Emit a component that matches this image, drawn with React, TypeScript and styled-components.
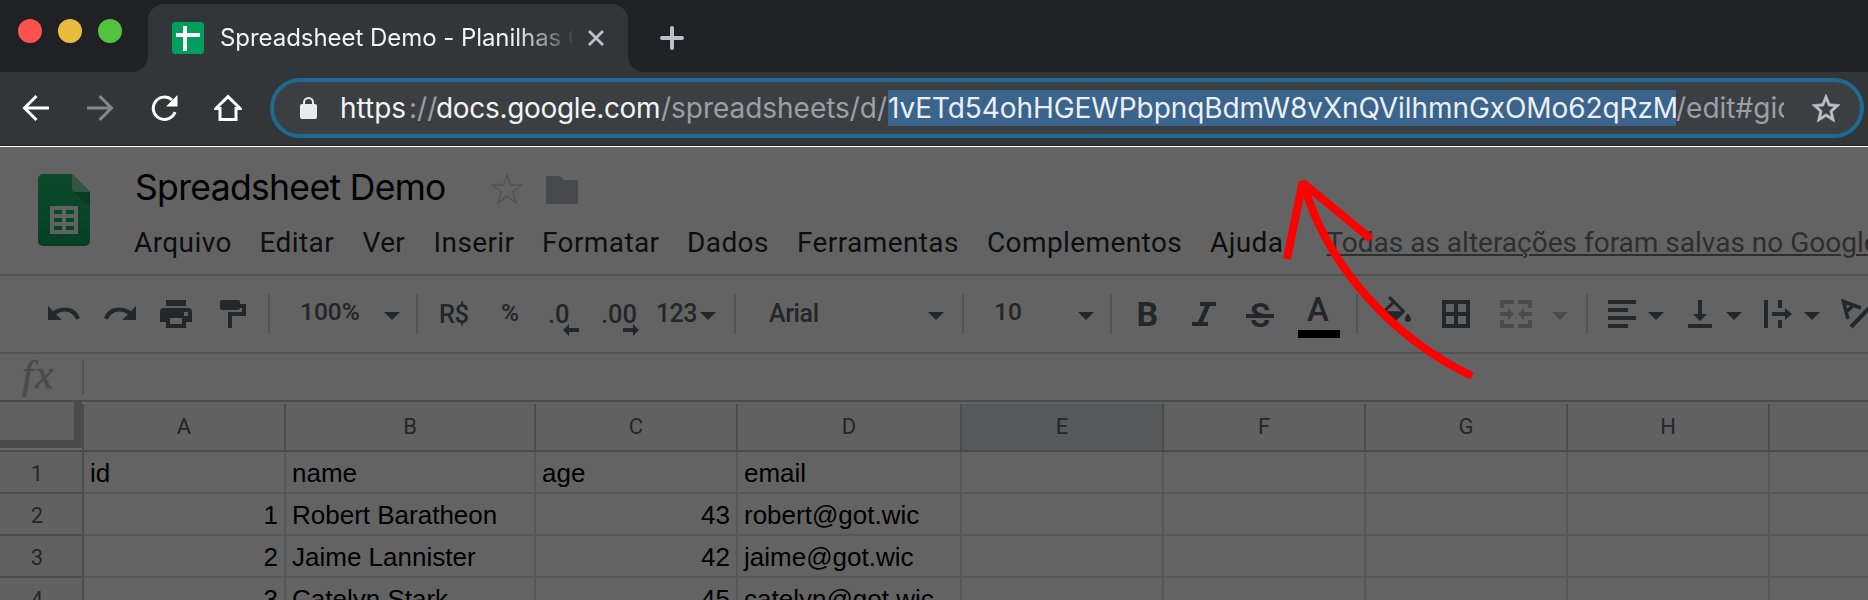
import React from 'react';
import styled, { createGlobalStyle, css } from 'styled-components';

const ui = "Inter, 'Liberation Sans', sans-serif";
const roboto = "Roboto, 'Liberation Sans', sans-serif";
const ink = '#242628';
const pageBg = '#636363';
const headLine = '#4b4b4b';
const cellLine = '#575757';

const Global = createGlobalStyle`
  *, *::before, *::after { box-sizing: border-box; }
  html, body { margin: 0; padding: 0; background: ${pageBg}; overflow: hidden; }
  svg { display: block; flex: none; }
`;

const Window = styled.div`
  position: relative;
  width: 1868px;
  height: 600px;
  overflow: hidden;
  display: flex;
  flex-direction: column;
  background: ${pageBg};
`;

/* ---------- browser chrome ---------- */

const TabStrip = styled.div`
  flex: none;
  height: 72px;
  display: flex;
  background: #202124;
`;

const Lights = styled.div`
  width: 148px;
  padding: 19px 0 0 18px;
  display: flex;
  gap: 16px;
`;

const Light = styled.span<{ $color: string }>`
  width: 24px;
  height: 24px;
  border-radius: 50%;
  background: ${(p) => p.$color};
`;

const Tab = styled.div`
  position: relative;
  width: 480px;
  height: 68px;
  margin-top: 4px;
  padding: 0 24px;
  display: flex;
  align-items: center;
  border-radius: 16px 16px 0 0;
  background: #323639;
  &::before, &::after {
    content: '';
    position: absolute;
    bottom: 0;
    width: 16px;
    height: 16px;
  }
  &::before { left: -16px; background: radial-gradient(circle at 0 0, transparent 15.5px, #323639 16.5px); }
  &::after { right: -16px; background: radial-gradient(circle at 100% 0, transparent 15.5px, #323639 16.5px); }
`;

const TabTitle = styled.span`
  width: 352px;
  margin: 0 16px;
  overflow: hidden;
  white-space: nowrap;
  font: 420 24px/32px ${ui};
  letter-spacing: -0.05px;
  color: #f1f3f4;
  mask-image: linear-gradient(90deg, #000 295px, transparent 358px);
`;

const NewTab = styled.div`
  padding: 26px 0 0 32px;
`;

const NavBar = styled.div`
  flex: none;
  height: 75px;
  padding: 6px 4px 0 22px;
  display: flex;
  background: #323639;
  border-bottom: 1px solid #fff;
  box-shadow: inset 0 -1px 0 #242127;
`;

const NavIcons = styled.div`
  width: 248px;
  padding-top: 16px;
  display: flex;
  gap: 36px;
`;

const Omnibox = styled.div`
  width: 1594px;
  height: 60px;
  border: 4px solid #1f6a91;
  border-radius: 30px;
  background: #3c3f42;
  display: flex;
  align-items: center;
`;

const LockSlot = styled.div`
  width: 66px;
  padding-left: 25.5px;
`;

const Url = styled.div`
  width: 1444px;
  height: 36px;
  display: flex;
  overflow: hidden;
  white-space: pre;
  font: 430 28px/37px ${ui};
  color: #f1f3f4;
`;

const UrlPart = styled.span<{ $w: number; $dim?: boolean; $sel?: boolean; $ls?: number }>`
  flex: none;
  width: ${(p) => p.$w}px;
  letter-spacing: ${(p) => p.$ls ?? 0}px;
  ${(p) => p.$dim && css`color: #9aa0a6; font-weight: 400;`}
  ${(p) => p.$sel && css`background: #3a648b; color: #eaf0f6; font-weight: 400;`}
`;

const StarSlot = styled.div`
  padding-left: 27.5px;
`;

/* ---------- document header ---------- */

const DocHeader = styled.div`
  flex: none;
  height: 129px;
  display: flex;
  border-bottom: 2px solid #535353;
`;

const LogoSlot = styled.div`
  width: 134px;
  padding: 27px 0 0 38px;
`;

const DocInfo = styled.div`
  flex: 1;
  min-width: 0;
`;

const TitleRow = styled.div`
  height: 78px;
  padding: 19px 0 0 1px;
  display: flex;
`;

const DocTitle = styled.span`
  width: 356px;
  white-space: nowrap;
  font: 430 35.5px/44px ${ui};
  letter-spacing: -0.67px;
  color: #000;
`;

const IconBox = styled.span<{ $ml?: number; $mt?: number }>`
  flex: none;
  margin-left: ${(p) => p.$ml ?? 0}px;
  margin-top: ${(p) => p.$mt ?? 0}px;
`;

const Menu = styled.div`
  display: flex;
  white-space: nowrap;
  font: 400 28px/36px ${roboto};
  letter-spacing: 0.4px;
  color: #0d0e0f;
`;

const MenuItem = styled.span<{ $w: number }>`
  flex: none;
  width: ${(p) => p.$w}px;
`;

const SavedNote = styled.span`
  color: #2e2e2e;
  letter-spacing: 0;
  text-decoration: underline;
  text-decoration-thickness: 2px;
  text-underline-offset: 2px;
`;

/* ---------- toolbar ---------- */

const Toolbar = styled.div`
  flex: none;
  height: 78px;
  display: flex;
  border-bottom: 2px solid #535353;
  color: ${ink};
`;

const Tool = styled.span<{ $ml: number; $mt: number; $w?: number; $faded?: boolean }>`
  flex: none;
  margin: ${(p) => p.$mt}px 0 0 ${(p) => p.$ml}px;
  ${(p) => p.$w && css`width: ${p.$w}px;`}
  ${(p) => p.$faded && css`color: #4a4a4b;`}
`;

const ToolText = styled(Tool)<{ $size?: number; $weight?: number; $ls?: number }>`
  height: 32px;
  white-space: nowrap;
  font: ${(p) => p.$weight ?? 500} ${(p) => p.$size ?? 25}px/32px ${roboto};
  letter-spacing: ${(p) => p.$ls ?? 0}px;
`;

const Divider = styled.span<{ $ml: number }>`
  flex: none;
  width: 2px;
  height: 40px;
  margin: 18px 0 0 ${(p) => p.$ml}px;
  background: #535353;
`;

const StrikeText = styled(ToolText)`
  position: relative;
  text-align: center;
  &::after {
    content: '';
    position: absolute;
    left: 0;
    right: 0;
    top: 14px;
    height: 6px;
    background: linear-gradient(${ink} 0 4px, ${pageBg} 4px);
  }
`;

const ColorText = styled(ToolText)`
  height: 44px;
  padding-right: 2px;
  text-align: center;
  border-bottom: 8px solid #000;
`;

/* ---------- formula bar ---------- */

const FormulaBar = styled.div`
  flex: none;
  height: 48px;
  display: flex;
  border-bottom: 2px solid ${headLine};
`;

const Fx = styled.span`
  width: 82px;
  height: 46px;
  padding-left: 22px;
  font: italic 400 41px/40px 'Liberation Serif', serif;
  letter-spacing: 1.5px;
  -webkit-text-stroke: 0.6px #4a4a4a;
  color: #4a4a4a;
`;

const FxDivider = styled.span`
  width: 2px;
  height: 34px;
  margin-top: 6px;
  background: #505050;
`;

/* ---------- grid ---------- */

const columns = '84px 202px 250px 202px 224px 202px 202px 202px 202px 98px';

const HeadRow = styled.div`
  flex: none;
  height: 50px;
  display: grid;
  grid-template-columns: ${columns};
  grid-template-rows: 48px;
  border-bottom: 2px solid ${headLine};
`;

const Corner = styled.div`
  height: 46px;
  width: 82px;
  border: solid #4a4a4a;
  border-width: 0 8px 8px 0;
  background: #606060;
`;

const CornerCell = styled.div`
  background: linear-gradient(${headLine}, ${headLine}) right bottom / 2px 46px no-repeat, #686868;
`;

const ColHead = styled.div<{ $active?: boolean }>`
  margin-top: 2px;
  border-right: 2px solid ${headLine};
  background: ${(p) => (p.$active ? '#57585a' : '#616161')};
  text-align: center;
  font: 400 22px/46px ${roboto};
  color: ${ink};
  &:last-child { border-right: 0; }
`;

const Row = styled.div`
  flex: none;
  height: 42px;
  display: grid;
  grid-template-columns: ${columns};
  grid-template-rows: 42px;
`;

const RowHead = styled.div`
  padding-right: 8px;
  border: solid ${headLine};
  border-width: 0 2px 2px 0;
  background: #616161;
  text-align: center;
  font: 400 22px/43px ${roboto};
  color: ${ink};
`;

const Cell = styled.div<{ $right?: boolean }>`
  padding: 0 6px;
  border: solid ${cellLine};
  border-width: 0 2px 2px 0;
  white-space: nowrap;
  text-align: ${(p) => (p.$right ? 'right' : 'left')};
  font: 400 26px/42px 'Liberation Sans', Arial, sans-serif;
  color: #000;
  &:last-child { border-right: 0; }
`;

const ArrowOverlay = styled.svg`
  position: absolute;
  left: 1270px;
  top: 170px;
`;

const Caret = () => (
  <svg width="16" height="8" viewBox="0 0 16 8" fill="currentColor"><path d="M0 0h16L8 8z" /></svg>
);

const letters = ['A', 'B', 'C', 'D', 'E', 'F', 'G', 'H', ''];
const rows: string[][] = [
  ['id', 'name', 'age', 'email'],
  ['1', 'Robert Baratheon', '43', 'robert@got.wic'],
  ['2', 'Jaime Lannister', '42', 'jaime@got.wic'],
  ['3', 'Catelyn Stark', '45', 'catelyn@got.wic'],
];
const menu: [string, number][] = [
  ['Arquivo', 125.5], ['Editar', 103], ['Ver', 71], ['Inserir', 108.5], ['Formatar', 145],
  ['Dados', 110], ['Ferramentas', 190], ['Complementos', 223], ['Ajuda', 116.5],
];

function BrowserChrome() {
  return (
    <>
      <TabStrip>
        <Lights>
          <Light $color="#ff5150" />
          <Light $color="#e8bd3f" />
          <Light $color="#53c33f" />
        </Lights>
        <Tab>
          <svg width="32" height="32" viewBox="0 0 32 32">
            <rect width="32" height="32" rx="3" fill="#009f5b" />
            <path d="M4 11h24v4H4zM11 4h4v25h-4z" fill="#fff" />
          </svg>
          <TabTitle>Spreadsheet Demo - Planilhas Google</TabTitle>
          <svg width="16" height="16" viewBox="0 0 16 16" stroke="#bdc1c5" strokeWidth="2.8"><path d="M1 1l14 14M15 1L1 15" /></svg>
        </Tab>
        <NewTab>
          <svg width="24" height="24" viewBox="0 0 24 24" stroke="#bdc1c5" strokeWidth="4" strokeLinecap="round"><path d="M12 2v20M2 12h20" /></svg>
        </NewTab>
      </TabStrip>
      <NavBar>
        <NavIcons>
          <svg width="28" height="28" viewBox="0 0 28 28" fill="none" stroke="#fff" strokeWidth="3"><path d="M27 14H3M14.5 2L2.5 14l12 12" /></svg>
          <svg width="28" height="28" viewBox="0 0 28 28" fill="none" stroke="#85888a" strokeWidth="3"><path d="M1 14h24M13.5 2l12 12-12 12" /></svg>
          <svg width="28" height="28" viewBox="0 0 28 28" fill="none" stroke="#fff" strokeWidth="3"><path d="M25 18A11.2 11.2 0 1 1 22 6" /><path d="M27.5 1v11.5H16z" fill="#fff" stroke="none" /></svg>
          <svg width="28" height="28" viewBox="0 0 28 28" fill="none" stroke="#fff" strokeWidth="3"><path d="M1.8 14.5H6V25.5H22V14.5h4.2L14 2.6z" /></svg>
        </NavIcons>
        <Omnibox>
          <LockSlot>
            <svg width="17" height="22" viewBox="0 0 17 22"><rect y="7" width="17" height="15" rx="2" fill="#e8eaed" /><path d="M4 8V5.5a4.5 4.5 0 0 1 9 0V8" fill="none" stroke="#e8eaed" strokeWidth="2" /></svg>
          </LockSlot>
          <Url>
            <UrlPart $w={69}>https</UrlPart>
            <UrlPart $w={27} $dim>://</UrlPart>
            <UrlPart $w={225} $ls={-0.33}>docs.google.com</UrlPart>
            <UrlPart $w={227} $dim $ls={-0.03}>/spreadsheets/d/</UrlPart>
            <UrlPart $w={788} $sel $ls={-0.08}>1vETd54ohHGEWPbpnqBdmW8vXnQVilhmnGxOMo62qRzM</UrlPart>
            <UrlPart $w={108} $dim>/edit#gid</UrlPart>
          </Url>
          <StarSlot>
            <svg width="28" height="28" viewBox="2 2 20 19" preserveAspectRatio="none" fill="#bdc1c5" stroke="#bdc1c5" strokeWidth="0.4" overflow="visible">
              <path d="M22 9.24l-7.19-.62L12 2 9.19 8.63 2 9.24l5.46 4.73L5.82 21 12 17.27 18.18 21l-1.63-7.03L22 9.24zM12 15.4l-3.76 2.27 1-4.28-3.32-2.88 4.38-.38L12 6.1l1.71 4.04 4.38.38-3.32 2.88 1 4.28L12 15.4z" />
            </svg>
          </StarSlot>
        </Omnibox>
      </NavBar>
    </>
  );
}

function Header() {
  return (
    <DocHeader>
      <LogoSlot>
        <svg width="52" height="72" viewBox="0 0 52 72">
          <defs>
            <linearGradient id="sheet" x1="0" y1="0" x2="0" y2="1">
              <stop offset="0" stopColor="#0d4b2d" /><stop offset="1" stopColor="#053f24" />
            </linearGradient>
          </defs>
          <path d="M5 0h29l18 18v49a5 5 0 0 1-5 5H5a5 5 0 0 1-5-5V5a5 5 0 0 1 5-5z" fill="url(#sheet)" />
          <path d="M36 18l16 15V18z" fill="#073a22" />
          <path d="M34 0l18 18H38a4 4 0 0 1-4-4z" fill="#34543f" />
          <path fillRule="evenodd" fill="#5d6460" d="M12 32h28v28H12zM16 36v4h8v-4zm12 0v4h8v-4zM16 44v4h8v-4zm12 0v4h8v-4zM16 52v4h8v-4zm12 0v4h8v-4z" />
        </svg>
      </LogoSlot>
      <DocInfo>
        <TitleRow>
          <DocTitle>Spreadsheet Demo</DocTitle>
          <IconBox $mt={7}>
            <svg width="32" height="32" viewBox="0 0 32 32" fill="none" stroke="#4f4f50" strokeWidth="1.2"><path d="M16 2l3.6 10.2H30.500l-8.700 6.500 3.300 11.200L16 23.200 6.900 29.900l3.300-11.200L1.500 12.200h10.900z" /></svg>
          </IconBox>
          <IconBox $ml={23} $mt={10}>
            <svg width="32" height="28" viewBox="0 0 32 28" fill="#47484a"><path d="M2 0h12l4 4h12a2 2 0 0 1 2 2v20a2 2 0 0 1-2 2H2a2 2 0 0 1-2-2V2a2 2 0 0 1 2-2z" /></svg>
          </IconBox>
        </TitleRow>
        <Menu>
          {menu.map(([label, w]) => <MenuItem key={label} $w={w}>{label}</MenuItem>)}
          <SavedNote>Todas as alterações foram salvas no Google Drive</SavedNote>
        </Menu>
      </DocInfo>
    </DocHeader>
  );
}

function Tools() {
  return (
    <Toolbar>
      <Tool $ml={48} $mt={30}>
        <svg width="32" height="14" viewBox="0 0 32 14"><path d="M0 0l5 5C9 2.500 13 1.500 17 1.500c7 0 12.500 4 15 10.500l-4 1.500C26 8.500 22 5.500 17 5.500c-3.500 0-6.500 1-9 3L14 14H0z" fill="currentColor" /></svg>
      </Tool>
      <Tool $ml={24} $mt={30}>
        <svg width="32" height="14" viewBox="0 0 32 14"><path transform="translate(32 0) scale(-1 1)" d="M0 0l5 5C9 2.500 13 1.500 17 1.500c7 0 12.500 4 15 10.500l-4 1.500C26 8.500 22 5.500 17 5.500c-3.500 0-6.500 1-9 3L14 14H0z" fill="currentColor" /></svg>
      </Tool>
      <Tool $ml={24} $mt={24}>
        <svg width="32" height="28" viewBox="0 0 32 28"><path fill="currentColor" fillRule="evenodd" d="M6 0h20v6H6zM4 8h24a4 4 0 0 1 4 4v10h-6v6H6v-6H0V12a4 4 0 0 1 4-4zm6 10v6h12v-6zm14-6v4h4v-4z" /></svg>
      </Tool>
      <Tool $ml={28} $mt={24}>
        <svg width="26" height="28" viewBox="0 0 26 28"><path fill="currentColor" d="M2 0h16a2 2 0 0 1 2 2v2h6v12H12v12H8V12h14V8h-2a2 2 0 0 1-2 2H2a2 2 0 0 1-2-2V2a2 2 0 0 1 2-2z" /></svg>
      </Tool>
      <Divider $ml={22} />
      <ToolText $ml={30} $mt={20} $w={84} $size={24.500}>100%</ToolText>
      <Tool $ml={0} $mt={36}><Caret /></Tool>
      <Divider $ml={16} />
      <ToolText $ml={21} $mt={22} $w={42} $size={25.500} $ls={-0.5}>R$</ToolText>
      <ToolText $ml={20} $mt={21} $w={48} $size={24.500}>%</ToolText>
      <Tool $ml={0} $mt={26}>
        <svg width="32" height="34" viewBox="0 0 32 34" fill="currentColor">
          <text x="-1" y="20.5" fontFamily="Roboto" fontWeight="500" fontSize="25.5">.0</text>
          <path d="M14 28l6-6v4h10v4H20v4z" />
        </svg>
      </Tool>
      <Tool $ml={22} $mt={26}>
        <svg width="37" height="34" viewBox="0 0 37 34" fill="currentColor">
          <text x="-2" y="20.5" fontFamily="Roboto" fontWeight="500" fontSize="25.5">.00</text>
          <path d="M36 28l-6-6v4H20v4h10v4z" />
        </svg>
      </Tool>
      <ToolText $ml={16} $mt={22} $w={44} $ls={-0.6}>123</ToolText>
      <Tool $ml={0} $mt={36}><Caret /></Tool>
      <Divider $ml={18} />
      <ToolText $ml={33} $mt={22} $w={159} $ls={-0.4}>Arial</ToolText>
      <Tool $ml={0} $mt={36}><Caret /></Tool>
      <Divider $ml={18} />
      <ToolText $ml={30} $mt={20} $w={84} $size={24.500}>10</ToolText>
      <Tool $ml={0} $mt={36}><Caret /></Tool>
      <Divider $ml={16} />
      <ToolText $ml={24.5} $mt={22} $w={26.5} $size={34} $weight={700}>B</ToolText>
      <Tool $ml={29} $mt={26}>
        <svg width="24" height="24" viewBox="0 0 24 24"><path fill="currentColor" d="M8 0h16v4h-6l-7 16h5v4H0v-4h6l7-16H8z" /></svg>
      </Tool>
      <StrikeText $ml={30} $mt={24} $w={28} $size={33} $weight={600}>S</StrikeText>
      <ColorText $ml={24} $mt={18} $w={42} $size={33}>A</ColorText>
      <Divider $ml={16} />
      <Tool $ml={25} $mt={20}>
        <svg width="28" height="26" viewBox="3 0 18 17" preserveAspectRatio="none" fill="currentColor">
          <path d="M16.56 8.94L7.62 0 6.21 1.41l2.38 2.38-5.15 5.15c-.59.59-.59 1.54 0 2.12l5.5 5.5c.29.29.68.44 1.06.44s.77-.15 1.06-.44l5.5-5.5c.59-.58.59-1.53 0-2.12zM5.21 10L10 5.21 14.79 10H5.21zM19 11.5s-2 2.17-2 3.5c0 1.1.9 2 2 2s2-.9 2-2c0-1.33-2-3.5-2-3.5z" />
        </svg>
      </Tool>
      <Tool $ml={31} $mt={24}>
        <svg width="28" height="28" viewBox="0 0 28 28"><path fillRule="evenodd" fill="currentColor" d="M0 0h28v28H0zM4 4v8h8V4zm12 0v8h8V4zM4 16v8h8v-8zm12 0v8h8v-8z" /></svg>
      </Tool>
      <Tool $ml={30} $mt={24} $faded>
        <svg width="32" height="28" viewBox="0 0 32 28" fill="currentColor">
          <path d="M0 0h14v4H4v4H0zM18 0h14v8h-4V4H18zM0 20h4v4h10v4H0zM28 20h4v8H18v-4h10zM0 12h8V8l6 6-6 6v-4H0zM32 12h-8V8l-6 6 6 6v-4h8z" />
        </svg>
      </Tool>
      <Tool $ml={20} $mt={36} $faded><Caret /></Tool>
      <Divider $ml={18} />
      <Tool $ml={20} $mt={24}>
        <svg width="28" height="28" viewBox="0 0 28 28"><path fill="currentColor" d="M0 0h28v4H0zM0 8h20v4H0zM0 16h28v4H0zM0 24h20v4H0z" /></svg>
      </Tool>
      <Tool $ml={12} $mt={36}><Caret /></Tool>
      <Tool $ml={24} $mt={24}>
        <svg width="24" height="28" viewBox="0 0 24 28"><path fill="currentColor" d="M10 0h4v14h5l-7 7-7-7h5zM0 24h24v4H0z" /></svg>
      </Tool>
      <Tool $ml={14} $mt={36}><Caret /></Tool>
      <Tool $ml={22} $mt={24}>
        <svg width="28" height="28" viewBox="0 0 28 28"><path fill="currentColor" d="M0 0h4v28H0zM14 0h4v8h-4zM14 20h4v8h-4zM8 12h13V8l7 6-7 6v-4H8z" /></svg>
      </Tool>
      <Tool $ml={12} $mt={36}><Caret /></Tool>
      <Tool $ml={21} $mt={23}>
        <svg width="34" height="30" viewBox="0 0 34 30" fill="none" stroke="currentColor" strokeWidth="3.600">
          <path d="M7 20L2.500 2.500 20 9M5 13l8-7" />
          <path d="M10 28L29 8" strokeWidth="4" />
        </svg>
      </Tool>
    </Toolbar>
  );
}

export default function App() {
  return (
    <Window>
      <Global />
      <BrowserChrome />
      <Header />
      <Tools />
      <FormulaBar><Fx>fx</Fx><FxDivider /></FormulaBar>
      <HeadRow>
        <CornerCell><Corner /></CornerCell>
        {letters.map((l, i) => <ColHead key={i} $active={l === 'E'}>{l}</ColHead>)}
      </HeadRow>
      {rows.map((r, ri) => (
        <Row key={ri}>
          <RowHead>{ri + 1}</RowHead>
          {letters.map((_, ci) => (
            <Cell key={ci} $right={ri > 0 && (ci === 0 || ci === 2)}>{r[ci] ?? ''}</Cell>
          ))}
        </Row>
      ))}
      <ArrowOverlay width="220" height="220" viewBox="1270 170 220 220" fill="none" stroke="#ff0000" strokeWidth="8">
        <path d="M1287 259L1302.500 182.500L1371 239" strokeLinejoin="bevel" />
        <path d="M1472 376C1390 337 1325 262 1303 182" />
      </ArrowOverlay>
    </Window>
  );
}
